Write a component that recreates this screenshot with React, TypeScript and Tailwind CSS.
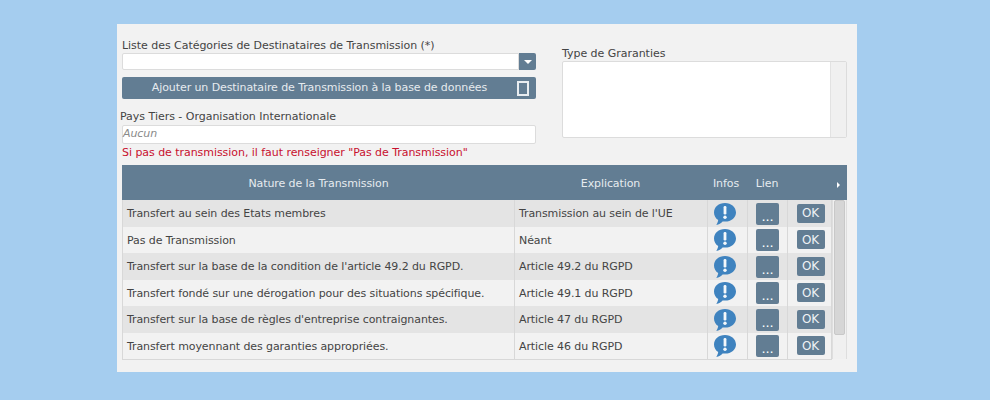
const rows: [string, string][] = [
  ["Transfert au sein des Etats membres", "Transmission au sein de l'UE"],
  ["Pas de Transmission", "Néant"],
  ["Transfert sur la base de la condition de l'article 49.2 du RGPD.", "Article 49.2 du RGPD"],
  ["Transfert fondé sur une dérogation pour des situations spécifique.", "Article 49.1 du RGPD"],
  ["Transfert sur la base de règles d'entreprise contraignantes.", "Article 47 du RGPD"],
  ["Transfert moyennant des garanties appropriées.", "Article 46 du RGPD"],
];

function Bubble() {
  return (
    <svg width="24" height="24" viewBox="0 0 24 24">
      <path d="M12 1C5.6 1 1 5 1 10.500c0 3.200 1.600 5.900 4.200 7.600-.2 1.700-.9 3.400-1.900 4.900 2.600-.5 4.800-1.900 6.300-3.600.8.1 1.600.2 2.400.2 6.400 0 11-4 11-9.100S18.400 1 12 1z" fill="#3f83bf" />
      <rect x="10.600" y="4" width="2.800" height="8.500" rx="1.200" fill="#f4f8fb" />
      <circle cx="12" cy="15.300" r="1.700" fill="#f4f8fb" />
    </svg>
  );
}

export default function App() {
  return (
    <div className="w-[990px] h-[400px] bg-[#a5cdef] pt-[24px] pl-[117px] overflow-hidden font-['DejaVu_Sans',Verdana,sans-serif] text-[11px] tracking-[-0.09px] text-[#444444]">
      <div className="w-[740px] h-[348px] bg-[#f2f2f2] pl-[5px] pt-[14px]">
        <div className="flex h-[127px]">
          <div className="w-[414px] flex flex-col">
            <div className="h-[15px] leading-[15px] tracking-[-0.04px]">Liste des Catégories de Destinataires de Transmission (*)</div>
            <div className="flex h-[17px]">
              <div className="flex-1 bg-white border border-[#dcdcdc] rounded-l-[2px]" />
              <div className="w-[17px] bg-[#627d93] rounded-r-[2px] flex items-center justify-center">
                <div className="w-0 h-0 border-x-[4px] border-x-transparent border-t-[4px] border-t-white" />
              </div>
            </div>
            <div className="h-[22px] mt-[7px] bg-[#627d93] rounded-[2px] flex items-center text-[#e6ebef]">
              <div className="flex-1 text-center">Ajouter un Destinataire de Transmission à la base de données</div>
              <div className="w-[12px] h-[15px] border-2 border-[#e8edf1] mr-[7px]" />
            </div>
            <div className="h-[15px] leading-[15px] mt-[10px] -ml-[2px] tracking-[-0.02px]">Pays Tiers - Organisation Internationale</div>
            <div className="h-[19px] mt-[1px] bg-white border border-[#dcdcdc] rounded-[2px] flex items-center italic text-[#8a8a8a]">Aucun</div>
            <div className="h-[15px] leading-[15px] mt-[1px] tracking-[-0.05px] text-[#c8102e]">Si pas de transmission, il faut renseigner "Pas de Transmission"</div>
          </div>
          <div className="w-[285px] ml-[26px] pt-[8px] flex flex-col">
            <div className="h-[15px] leading-[15px] tracking-[-0.03px]">Type de Graranties</div>
            <div className="h-[77px] flex border border-[#dcdcdc] rounded-[2px] bg-white">
              <div className="flex-1" />
              <div className="w-[16px] bg-[#f0f0f0] border-l border-[#e2e2e2]" />
            </div>
          </div>
        </div>
        <div className="w-[725px] h-[35px] bg-[#627d93] flex items-center pt-[4px] text-[#e6ebef]">
          <div className="w-[393px] text-center">Nature de la Transmission</div>
          <div className="w-[191px] text-center">Explication</div>
          <div className="w-[40px] text-center">Infos</div>
          <div className="w-[42px] text-center">Lien</div>
          <div className="flex-1 flex justify-end pr-[7px]">
            <div className="w-0 h-0 border-y-[3px] border-y-transparent border-l-[3px] border-l-white" />
          </div>
        </div>
        <div className="w-[725px] flex">
          <div className="w-[710px] border-l border-b border-r border-[#d8d8d8]">
            {rows.map(([a, b], i) => (
              <div key={a} className={`flex h-[26.500px] items-center ${i % 2 === 0 ? "bg-[#e4e4e4]" : "bg-[#f2f2f2]"}`}>
                <div className="w-[392px] h-full flex items-center pl-[4px] pt-[2px] border-r border-[#d8d8d8]">{a}</div>
                <div className="w-[193px] h-full flex items-center pl-[4px] pt-[2px] border-r border-[#d8d8d8]">{b}</div>
                <div className="w-[40px] h-full flex items-center justify-center pr-[6px] pt-[1px] border-r border-[#d8d8d8]"><Bubble /></div>
                <div className="w-[40px] h-full flex items-center justify-center pt-[1px] border-r border-[#d8d8d8]">
                  <div className="w-[23px] h-[22px] bg-[#627d93] rounded-[2px] text-white flex items-end justify-center leading-[16px] text-[13px]">...</div>
                </div>
                <div className="flex-1 h-full flex items-center justify-center pl-[2px]">
                  <div className="w-[28px] h-[19px] bg-[#627d93] rounded-[2px] text-[#eef2f5] flex items-center justify-center text-[12px]">OK</div>
                </div>
              </div>
            ))}
          </div>
          <div className="w-[15px] h-[159px] bg-[#f0f0f0] border-x border-[#dedede] px-[1px]">
            <div className="h-[135px] bg-[#d6d6d6] border border-[#c8c8c8] rounded-[2px]" />
          </div>
        </div>
      </div>
    </div>
  );
}
